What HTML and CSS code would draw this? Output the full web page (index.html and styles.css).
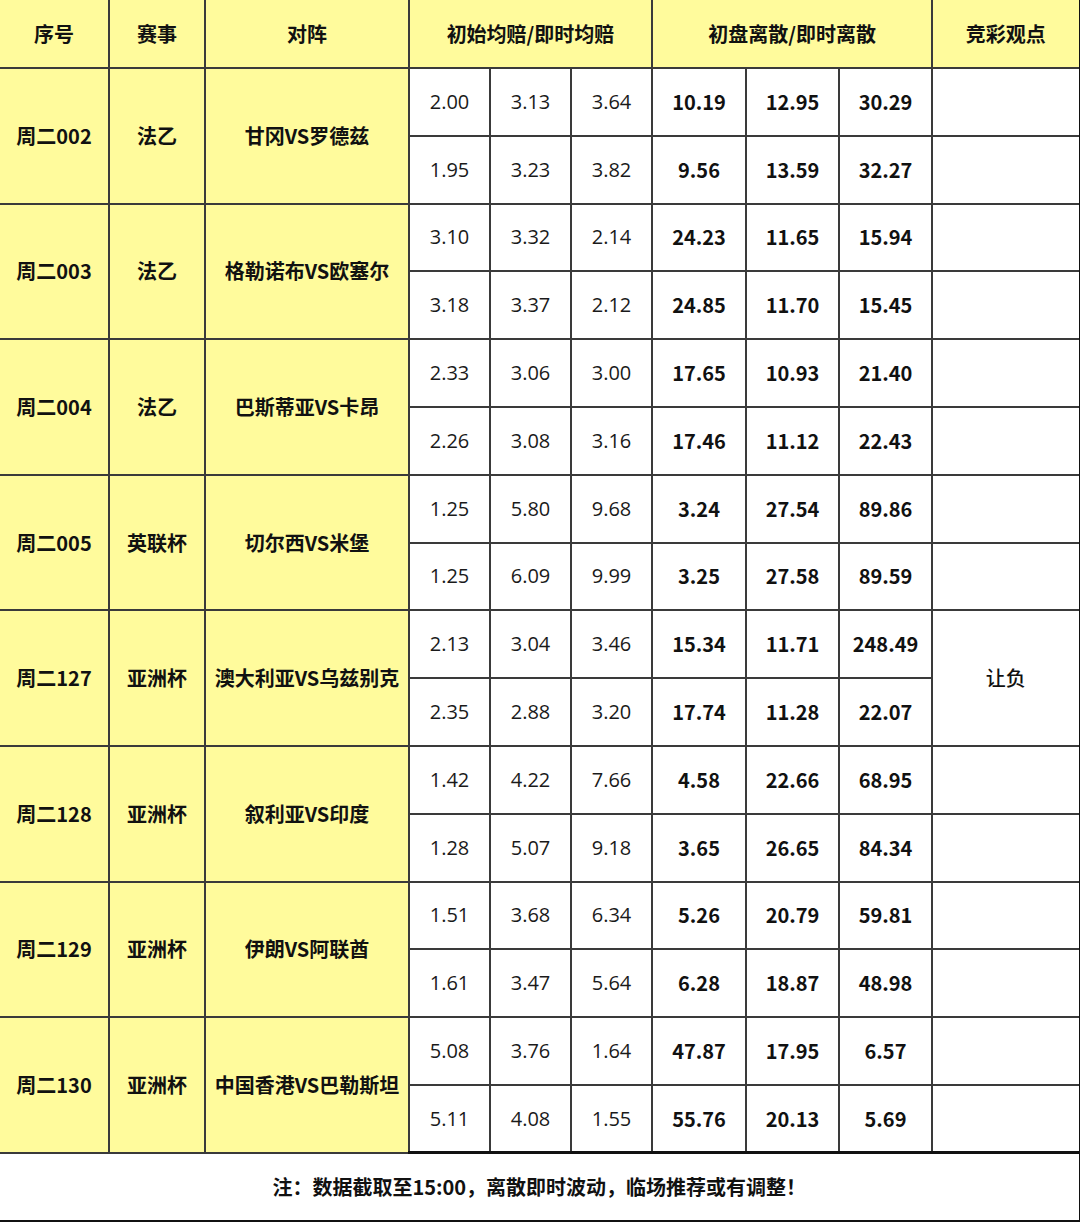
FILE: index.html
```html
<!DOCTYPE html>
<html lang="zh-CN">
<head>
<meta charset="utf-8">
<title>竞彩离散</title>
<link rel="stylesheet" href="styles.css">
</head>
<body>
<table class="sheet">
  <colgroup>
    <col class="c-no"><col class="c-lg"><col class="c-match">
    <col class="c-odd"><col class="c-odd"><col class="c-odd">
    <col class="c-d1"><col class="c-d2"><col class="c-d3"><col class="c-view">
  </colgroup>
  <thead>
    <tr class="head">
      <th class="first">序号</th><th>赛事</th><th>对阵</th>
      <th colspan="3">初始均赔/即时均赔</th>
      <th colspan="3">初盘离散/即时离散</th>
      <th class="v">竞彩观点</th>
    </tr>
  </thead>
  <tbody>
    <tr class="r"><td rowspan="2" class="y first">周二002</td><td rowspan="2" class="y">法乙</td><td rowspan="2" class="y">甘冈VS罗德兹</td><td class="n">2.00</td><td class="n">3.13</td><td class="n">3.64</td><td class="b">10.19</td><td class="b">12.95</td><td class="b">30.29</td><td class="v"></td></tr>
    <tr class="r"><td class="n">1.95</td><td class="n">3.23</td><td class="n">3.82</td><td class="b">9.56</td><td class="b">13.59</td><td class="b">32.27</td><td class="v"></td></tr>

    <tr class="r"><td rowspan="2" class="y first">周二003</td><td rowspan="2" class="y">法乙</td><td rowspan="2" class="y">格勒诺布VS欧塞尔</td><td class="n">3.10</td><td class="n">3.32</td><td class="n">2.14</td><td class="b">24.23</td><td class="b">11.65</td><td class="b">15.94</td><td class="v"></td></tr>
    <tr class="r"><td class="n">3.18</td><td class="n">3.37</td><td class="n">2.12</td><td class="b">24.85</td><td class="b">11.70</td><td class="b">15.45</td><td class="v"></td></tr>

    <tr class="r"><td rowspan="2" class="y first">周二004</td><td rowspan="2" class="y">法乙</td><td rowspan="2" class="y">巴斯蒂亚VS卡昂</td><td class="n">2.33</td><td class="n">3.06</td><td class="n">3.00</td><td class="b">17.65</td><td class="b">10.93</td><td class="b">21.40</td><td class="v"></td></tr>
    <tr class="r"><td class="n">2.26</td><td class="n">3.08</td><td class="n">3.16</td><td class="b">17.46</td><td class="b">11.12</td><td class="b">22.43</td><td class="v"></td></tr>

    <tr class="r"><td rowspan="2" class="y first">周二005</td><td rowspan="2" class="y">英联杯</td><td rowspan="2" class="y">切尔西VS米堡</td><td class="n">1.25</td><td class="n">5.80</td><td class="n">9.68</td><td class="b">3.24</td><td class="b">27.54</td><td class="b">89.86</td><td class="v"></td></tr>
    <tr class="r"><td class="n">1.25</td><td class="n">6.09</td><td class="n">9.99</td><td class="b">3.25</td><td class="b">27.58</td><td class="b">89.59</td><td class="v"></td></tr>

    <tr class="r"><td rowspan="2" class="y first">周二127</td><td rowspan="2" class="y">亚洲杯</td><td rowspan="2" class="y">澳大利亚VS乌兹别克</td><td class="n">2.13</td><td class="n">3.04</td><td class="n">3.46</td><td class="b">15.34</td><td class="b">11.71</td><td class="b">248.49</td><td rowspan="2" class="v pick">让负</td></tr>
    <tr class="r"><td class="n">2.35</td><td class="n">2.88</td><td class="n">3.20</td><td class="b">17.74</td><td class="b">11.28</td><td class="b">22.07</td></tr>

    <tr class="r"><td rowspan="2" class="y first">周二128</td><td rowspan="2" class="y">亚洲杯</td><td rowspan="2" class="y">叙利亚VS印度</td><td class="n">1.42</td><td class="n">4.22</td><td class="n">7.66</td><td class="b">4.58</td><td class="b">22.66</td><td class="b">68.95</td><td class="v"></td></tr>
    <tr class="r"><td class="n">1.28</td><td class="n">5.07</td><td class="n">9.18</td><td class="b">3.65</td><td class="b">26.65</td><td class="b">84.34</td><td class="v"></td></tr>

    <tr class="r"><td rowspan="2" class="y first">周二129</td><td rowspan="2" class="y">亚洲杯</td><td rowspan="2" class="y">伊朗VS阿联酋</td><td class="n">1.51</td><td class="n">3.68</td><td class="n">6.34</td><td class="b">5.26</td><td class="b">20.79</td><td class="b">59.81</td><td class="v"></td></tr>
    <tr class="r"><td class="n">1.61</td><td class="n">3.47</td><td class="n">5.64</td><td class="b">6.28</td><td class="b">18.87</td><td class="b">48.98</td><td class="v"></td></tr>

    <tr class="r"><td rowspan="2" class="y first">周二130</td><td rowspan="2" class="y">亚洲杯</td><td rowspan="2" class="y">中国香港VS巴勒斯坦</td><td class="n">5.08</td><td class="n">3.76</td><td class="n">1.64</td><td class="b">47.87</td><td class="b">17.95</td><td class="b">6.57</td><td class="v"></td></tr>
    <tr class="r last"><td class="n">5.11</td><td class="n">4.08</td><td class="n">1.55</td><td class="b">55.76</td><td class="b">20.13</td><td class="b">5.69</td><td class="v"></td></tr>
  </tbody>
  <tfoot>
    <tr class="foot"><td colspan="10" class="first">注：数据截取至15:00，离散即时波动，临场推荐或有调整！</td></tr>
  </tfoot>
</table>
</body>
</html>
```

FILE: styles.css
```css
html, body {
  margin: 0;
  padding: 0;
  background: #ffffff;
}

.sheet {
  width: 1079px;
  table-layout: fixed;
  border-collapse: collapse;
  font-family: "Noto Sans CJK SC", "Noto Sans", sans-serif;
  color: #111;
}

.c-no { width: 109px; }
.c-lg { width: 96px; }
.c-match { width: 204px; }
.c-odd { width: 81px; }
.c-d1 { width: 94px; }
.c-d2 { width: 93px; }
.c-d3 { width: 93px; }
.c-view { width: 148px; }

.sheet th,
.sheet td {
  border: 2px solid #3a3a3a;
  padding: 0;
  text-align: center;
  vertical-align: middle;
  font-size: 20px;
  line-height: 1;
}

.sheet .first { border-left: none; }
.sheet .v { border-right: 3px solid #111; }
.sheet thead th { border-top: none; }

.head th {
  height: 67px;
  background: #fffb9c;
  font-weight: 700;
}

.r { height: 67.8px; }

.y {
  background: #fffb9c;
  font-weight: 700;
}

.n {
  font-family: "Open Sans", "Noto Sans", sans-serif;
  font-weight: 400;
  color: #1a1a1a;
  font-size: 19px;
}

.b {
  font-weight: 700;
  color: #111;
}

.v {
  background: #fff;
}

.head .v {
  background: #fffb9c;
}

.pick {
  font-weight: 500;
}

.last td { border-bottom: 3px solid #111; }

.foot td {
  height: 66px;
  font-weight: 700;
  font-size: 20px;
  border-bottom: 3px solid #111;
  border-right: 3px solid #111;
}
```
